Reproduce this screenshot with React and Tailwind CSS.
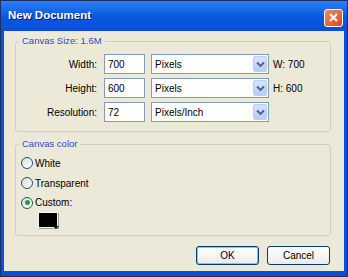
import React from 'react';

const ROWS = [
  { label: 'Width:', value: '700', unit: 'Pixels', note: 'W: 700' },
  { label: 'Height:', value: '600', unit: 'Pixels', note: 'H: 600' },
  { label: 'Resolution:', value: '72', unit: 'Pixels/Inch', note: '' },
];

const COLORS = [
  { label: 'White', checked: false },
  { label: 'Transparent', checked: false },
  { label: 'Custom:', checked: true },
];

function Chevron() {
  return (
    <svg width="9" height="7" viewBox="0 0 9 7">
      <path d="M1 1.5 L4.5 5 L8 1.5" fill="none" stroke="#4d6185" strokeWidth="1.8" />
    </svg>
  );
}

function Select({ text }) {
  return (
    <div className="w-[118px] h-[20px] bg-white border border-[#7f9db9] flex items-center">
      <span className="flex-1 pl-[3px]">{text}</span>
      <div className="w-[14px] h-[16px] mr-[1px] rounded-[2px] bg-linear-to-b from-[#d6e2fd] to-[#b4cbf8] border border-[#b9cdf5] flex items-center justify-center">
        <Chevron />
      </div>
    </div>
  );
}

function Radio({ checked }) {
  return (
    <div className="w-[12px] h-[12px] rounded-full border border-[#1c5180] bg-linear-to-br from-[#dcdcd4] to-white flex items-center justify-center">
      {checked && <div className="w-[5px] h-[5px] rounded-full bg-[#21a121]" />}
    </div>
  );
}

function Button({ children, focused }) {
  return (
    <button
      className={
        'w-[63px] h-[19px] rounded-[3px] border border-[#003c74] bg-linear-to-b from-white to-[#ecebe6] text-black ' +
        (focused ? 'shadow-[inset_0_0_0_1px_#98b8ee]' : '')
      }
    >
      {children}
    </button>
  );
}

export default function App() {
  return (
    <div className="w-[348px] h-[277px] bg-[#0a4fd6] border border-[#1c2f66] flex flex-col font-['Liberation_Sans',Arial,sans-serif] text-[10px] text-black">
      {/* title bar */}
      <div className="h-[30px] flex items-center justify-between pl-[7px] pr-[4px] bg-linear-to-b from-[#2f80f0] via-[#0a58e2] to-[#0a4fd6]">
        <span className="text-white font-bold text-[11.5px] [text-shadow:1px_1px_#0a1e6e]">New Document</span>
        <div className="w-[19px] h-[18px] mt-[3px] rounded-[3px] border border-white bg-linear-to-br from-[#f08a62] to-[#d9481c] flex items-center justify-center">
          <svg width="9" height="9" viewBox="0 0 9 9">
            <path d="M1 1 L8 8 M8 1 L1 8" stroke="white" strokeWidth="2" />
          </svg>
        </div>
      </div>

      {/* body */}
      <div className="flex-1 mx-[3px] mb-[5px] bg-[#ece9d8] flex flex-col">
        <fieldset className="mt-[4px] ml-[11px] mr-[13px] border border-[#d0d0bf] rounded-[3px] px-0 pt-[7px] pb-[9px] flex flex-col gap-[4px]">
          <legend className="ml-[3px] px-[3px] text-[9.5px] leading-[12px] text-[#1f4fc8]">Canvas Size: 1.6M</legend>
          {ROWS.map((row) => (
            <div key={row.label} className="flex items-center h-[20px]">
              <span className="w-[81px] text-right">{row.label}</span>
              <div className="ml-[7px] w-[41px] h-[20px] bg-white border border-[#7f9db9] flex items-center pl-[3px]">
                {row.value}
              </div>
              <div className="ml-[6px]">
                <Select text={row.unit} />
              </div>
              <span className="ml-[4px]">{row.note}</span>
            </div>
          ))}
        </fieldset>

        <fieldset className="mt-[6px] ml-[11px] mr-[13px] border border-[#d0d0bf] rounded-[3px] px-0 pt-[3px] pb-[6px] flex flex-col">
          <legend className="ml-[3px] px-[3px] text-[9.5px] leading-[12px] text-[#1f4fc8]">Canvas color</legend>
          {COLORS.map((c, i) => (
            <div key={c.label} className={'flex items-center gap-[2px] pl-[5px] ' + (i === 2 ? 'h-[19px]' : 'h-[20px]')}>
              <Radio checked={c.checked} />
              <span>{c.label}</span>
            </div>
          ))}
          <div className="ml-[22px] relative w-[21px] h-[17px]">
            <div className="w-[20px] h-[16px] bg-black border border-[#f4f4ee] shadow-[1px_1px_0_#a0a090]" />
            <div className="absolute right-0 bottom-0 w-0 h-0 border-l-[3px] border-r-[3px] border-t-[3px] border-l-transparent border-r-transparent border-t-black" />
          </div>
        </fieldset>

        <div className="mt-[10px] flex justify-end gap-[8px] pr-[14px]">
          <Button focused>OK</Button>
          <Button>Cancel</Button>
        </div>
      </div>
    </div>
  );
}
